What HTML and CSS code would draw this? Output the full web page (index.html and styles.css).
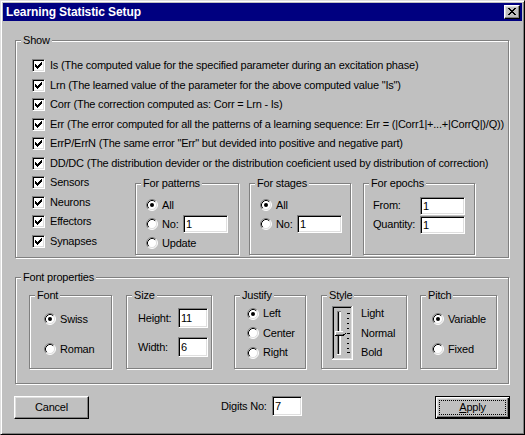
FILE: index.html
```html
<!DOCTYPE html>
<html>
<head>
<meta charset="utf-8">
<title>Learning Statistic Setup</title>
<link rel="stylesheet" href="styles.css">
</head>
<body>
<svg class="defs" width="0" height="0" aria-hidden="true">
  <symbol id="chk" viewBox="0 0 11 11">
    <path d="M2 4h1v3h-1zM3 5h1v3h-1zM4 6h1v3h-1zM5 5h1v3h-1zM6 4h1v3h-1zM7 3h1v3h-1zM8 2h1v3h-1z" fill="#000"/>
  </symbol>
  <symbol id="radio" viewBox="0 0 12 12">
    <circle cx="6" cy="6" r="5" fill="#fff"/>
    <path d="M2.11 9.89A5.5 5.5 0 0 1 9.89 2.11" fill="none" stroke="#808080"/>
    <path d="M9.89 2.11A5.5 5.5 0 0 1 2.11 9.89" fill="none" stroke="#fff"/>
    <path d="M2.82 9.18A4.5 4.5 0 0 1 9.18 2.82" fill="none" stroke="#000"/>
    <path d="M9.18 2.82A4.5 4.5 0 0 1 2.82 9.18" fill="none" stroke="#dfdfdf"/>
  </symbol>
  <symbol id="radio-on" viewBox="0 0 12 12">
    <use href="#radio"/>
    <circle cx="6" cy="6" r="2" fill="#000"/>
  </symbol>
</svg>
<div class="window">
  <div class="titlebar">
    <span class="title">Learning Statistic Setup</span>
    <div class="close">
      <svg width="8" height="7" viewBox="0 0 8 7" shape-rendering="crispEdges"><path d="M0 0h2v1h-2zM6 0h2v1h-2zM1 1h2v1h-2zM5 1h2v1h-2zM2 2h4v1h-4zM3 3h2v1h-2zM2 4h4v1h-4zM1 5h2v1h-2zM5 5h2v1h-2zM0 6h2v1h-2zM6 6h2v1h-2z" fill="#000"/></svg>
    </div>
  </div>
  <div class="client">
    <div class="group show">
      <span class="group-label">Show</span>
      <div class="check-row"><span class="checkbox"><svg width="11" height="11" shape-rendering="crispEdges"><use href="#chk"/></svg></span><span>Is (The computed value for the specified parameter during an excitation phase)</span></div>
      <div class="check-row"><span class="checkbox"><svg width="11" height="11" shape-rendering="crispEdges"><use href="#chk"/></svg></span><span>Lrn (The learned value of the parameter for the above computed value "Is")</span></div>
      <div class="check-row"><span class="checkbox"><svg width="11" height="11" shape-rendering="crispEdges"><use href="#chk"/></svg></span><span>Corr (The correction computed as: Corr = Lrn - Is)</span></div>
      <div class="check-row"><span class="checkbox"><svg width="11" height="11" shape-rendering="crispEdges"><use href="#chk"/></svg></span><span>Err (The error computed for all the patterns of a learning sequence: Err = (|Corr1|+...+|CorrQ|)/Q))</span></div>
      <div class="check-row"><span class="checkbox"><svg width="11" height="11" shape-rendering="crispEdges"><use href="#chk"/></svg></span><span>ErrP/ErrN (The same error "Err" but devided into positive and negative part)</span></div>
      <div class="check-row"><span class="checkbox"><svg width="11" height="11" shape-rendering="crispEdges"><use href="#chk"/></svg></span><span>DD/DC (The distribution devider or the distribution coeficient used by distribution of correction)</span></div>
      <div class="show-bottom">
        <div class="left-col">
          <div class="check-row"><span class="checkbox"><svg width="11" height="11" shape-rendering="crispEdges"><use href="#chk"/></svg></span><span>Sensors</span></div>
          <div class="check-row"><span class="checkbox"><svg width="11" height="11" shape-rendering="crispEdges"><use href="#chk"/></svg></span><span>Neurons</span></div>
          <div class="check-row"><span class="checkbox"><svg width="11" height="11" shape-rendering="crispEdges"><use href="#chk"/></svg></span><span>Effectors</span></div>
          <div class="check-row"><span class="checkbox"><svg width="11" height="11" shape-rendering="crispEdges"><use href="#chk"/></svg></span><span>Synapses</span></div>
        </div>
        <div class="group sub patterns">
          <span class="group-label">For patterns</span>
          <div class="radio-row"><svg class="radio"><use href="#radio-on"/></svg><span>All</span></div>
          <div class="radio-row"><svg class="radio"><use href="#radio"/></svg><span class="no-label">No:</span><input class="edit" type="text" value="1"></div>
          <div class="radio-row"><svg class="radio"><use href="#radio"/></svg><span>Update</span></div>
        </div>
        <div class="group sub stages">
          <span class="group-label">For stages</span>
          <div class="radio-row"><svg class="radio"><use href="#radio-on"/></svg><span>All</span></div>
          <div class="radio-row"><svg class="radio"><use href="#radio"/></svg><span class="no-label">No:</span><input class="edit" type="text" value="1"></div>
        </div>
        <div class="group sub epochs">
          <span class="group-label">For epochs</span>
          <div class="field-row"><span class="field-label">From:</span><input class="edit" type="text" value="1"></div>
          <div class="field-row"><span class="field-label">Quantity:</span><input class="edit" type="text" value="1"></div>
        </div>
      </div>
    </div>

    <div class="group font-props">
      <span class="group-label">Font properties</span>
      <div class="group fsub font-g">
        <span class="group-label">Font</span>
        <div class="radio-row"><svg class="radio"><use href="#radio-on"/></svg><span>Swiss</span></div>
        <div class="radio-row"><svg class="radio"><use href="#radio"/></svg><span>Roman</span></div>
      </div>
      <div class="group fsub size-g">
        <span class="group-label">Size</span>
        <div class="size-row"><span class="size-label">Height:</span><input class="edit small" type="text" value="11"></div>
        <div class="size-row"><span class="size-label">Width:</span><input class="edit small" type="text" value="6"></div>
      </div>
      <div class="group fsub justify-g">
        <span class="group-label">Justify</span>
        <div class="radio-row tall"><svg class="radio"><use href="#radio-on"/></svg><span>Left</span></div>
        <div class="radio-row tall"><svg class="radio"><use href="#radio"/></svg><span>Center</span></div>
        <div class="radio-row tall"><svg class="radio"><use href="#radio"/></svg><span>Right</span></div>
      </div>
      <div class="group fsub style-g">
        <span class="group-label">Style</span>
        <svg class="trackbar" width="21" height="54" viewBox="0 0 21 54" shape-rendering="crispEdges">
          <rect x="0" y="0" width="21" height="1" fill="#808080"/>
          <rect x="0" y="0" width="1" height="54" fill="#808080"/>
          <rect x="1" y="1" width="19" height="1" fill="#000"/>
          <rect x="1" y="1" width="1" height="52" fill="#000"/>
          <rect x="0" y="53" width="21" height="1" fill="#fff"/>
          <rect x="20" y="0" width="1" height="54" fill="#fff"/>
          <rect x="1" y="52" width="19" height="1" fill="#dfdfdf"/>
          <rect x="19" y="1" width="1" height="52" fill="#dfdfdf"/>
          <rect x="5" y="5" width="1" height="44" fill="#808080"/>
          <rect x="6" y="5" width="1" height="44" fill="#000"/>
          <rect x="7" y="5" width="1" height="44" fill="#dfdfdf"/>
          <rect x="8" y="5" width="1" height="44" fill="#fff"/>
          <rect x="5" y="5" width="4" height="1" fill="#808080"/>
          <rect x="5" y="48" width="4" height="1" fill="#fff"/>
          <rect x="15" y="7" width="3" height="1" fill="#000"/>
          <rect x="15" y="12" width="2" height="1" fill="#000"/>
          <rect x="15" y="17" width="2" height="1" fill="#000"/>
          <rect x="15" y="22" width="2" height="1" fill="#000"/>
          <rect x="15" y="27" width="3" height="1" fill="#000"/>
          <rect x="15" y="32" width="2" height="1" fill="#000"/>
          <rect x="15" y="37" width="2" height="1" fill="#000"/>
          <rect x="15" y="42" width="2" height="1" fill="#000"/>
          <rect x="15" y="46" width="3" height="1" fill="#000"/>
          <polygon points="3,25 11,25 13,27 11,29 3,29" fill="#c0c0c0"/>
          <rect x="3" y="25" width="8" height="1" fill="#fff"/>
          <rect x="3" y="25" width="1" height="5" fill="#fff"/>
          <rect x="3" y="29" width="9" height="1" fill="#000"/>
          <rect x="11" y="28" width="2" height="1" fill="#000"/>
          <rect x="13" y="27" width="1" height="1" fill="#000"/>
          <rect x="4" y="28" width="7" height="1" fill="#808080"/>
        </svg>
        <div class="style-labels">
          <div class="style-label">Light</div>
          <div class="style-label">Normal</div>
          <div class="style-label">Bold</div>
        </div>
      </div>
      <div class="group fsub pitch-g">
        <span class="group-label">Pitch</span>
        <div class="radio-row"><svg class="radio"><use href="#radio-on"/></svg><span>Variable</span></div>
        <div class="radio-row"><svg class="radio"><use href="#radio"/></svg><span>Fixed</span></div>
      </div>
    </div>

    <div class="bottom-row">
      <button class="btn" type="button">Cancel</button>
      <div class="digits">
        <span class="digits-label">Digits No:</span>
        <input class="edit digits-edit" type="text" value="7">
      </div>
      <button class="btn default" type="button"><span class="focus"><u>A</u>pply</span></button>
    </div>
  </div>
</div>
</body>
</html>
```

FILE: styles.css
```css
* { box-sizing: border-box; }
html, body { margin: 0; padding: 0; }
body {
  width: 525px;
  height: 435px;
  overflow: hidden;
  background: #c0c0c0;
  color: #000;
  font-family: "Liberation Sans", Arial, sans-serif;
  font-size: 11px;
  letter-spacing: -0.2px;
  line-height: 13px;
}
.defs { display: block; width: 0; height: 0; overflow: hidden; }

.window {
  width: 525px;
  height: 435px;
  border: 1px solid;
  border-color: #dfdfdf #000 #000 #dfdfdf;
  box-shadow: inset 1px 1px #fff, inset -1px -1px #808080;
  padding: 2px;
  display: flex;
  flex-direction: column;
}
.titlebar {
  height: 18px;
  flex: none;
  background: #000080;
  color: #fff;
  font-weight: bold;
  font-size: 12px;
  letter-spacing: -0.1px;
  display: flex;
  align-items: center;
  justify-content: space-between;
  padding: 0 2px 0 3px;
}
.close {
  width: 16px;
  height: 14px;
  background: #c0c0c0;
  border: 1px solid;
  border-color: #fff #000 #000 #fff;
  box-shadow: inset -1px -1px #808080, inset 1px 1px #dfdfdf;
  display: flex;
  align-items: flex-start;
  justify-content: flex-start;
  padding: 2px 0 0 3px;
}
.close svg { display: block; }

.client { flex: 1; }

.group {
  position: relative;
  border: 1px solid #808080;
  box-shadow: 1px 1px 0 #fff, inset 1px 1px 0 #fff;
}
.group-label {
  position: absolute;
  top: -7px;
  left: 5px;
  padding: 0 2px;
  background: #c0c0c0;
  line-height: 13px;
  white-space: nowrap;
}

.show {
  width: 494px;
  height: 218px;
  margin: 19px 0 0 12px;
  padding: 14.75px 0 0 16px;
}
.check-row {
  display: flex;
  align-items: center;
  height: 19.5px;
  gap: 5px;
  white-space: nowrap;
}
.checkbox {
  width: 13px;
  height: 13px;
  flex: none;
  background: #fff;
  border: 1px solid;
  border-color: #808080 #fff #fff #808080;
  box-shadow: inset 1px 1px #000, inset -1px -1px #dfdfdf;
}
.checkbox svg { display: block; }

.show-bottom { display: flex; align-items: flex-start; }
.left-col { width: 103px; flex: none; }
.sub { height: 72px; margin-top: 10.25px; flex: none; }
.patterns { width: 104px; padding: 11.5px 0 0 10px; }
.stages { width: 102px; margin-left: 10px; padding: 11.5px 0 0 10px; }
.epochs { width: 112px; margin-left: 12px; padding: 12px 0 0 9px; }

.radio-row {
  display: flex;
  align-items: center;
  height: 19px;
  white-space: nowrap;
}
.radio-row.tall { height: 19.5px; }
.radio {
  width: 12px;
  height: 12px;
  flex: none;
  display: block;
  margin-right: 4px;
}
.no-label { width: 17px; margin-right: 4px; }

.edit {
  width: 45px;
  height: 18px;
  margin: 0;
  padding: 0 0 0 2px;
  background: #fff;
  border: 1px solid;
  border-color: #808080 #fff #fff #808080;
  box-shadow: inset 1px 1px #000, inset -1px -1px #dfdfdf;
  font: inherit;
  letter-spacing: inherit;
  color: #000;
  outline: none;
}
.field-row { display: flex; align-items: center; height: 19px; white-space: nowrap; }
.field-label { width: 47px; flex: none; }

.font-props {
  width: 494px;
  height: 107px;
  margin: 19px 0 0 12px;
  padding: 17px 0 0 0;
  display: flex;
  align-items: flex-start;
}
.fsub { height: 74px; flex: none; }
.font-g {
  width: 83px;
  margin-left: 13px;
  padding: 13.5px 0 0 14px;
  display: flex;
  flex-direction: column;
  gap: 11px;
}
.size-g {
  width: 86px;
  margin-left: 14px;
  padding: 12px 0 0 11px;
  display: flex;
  flex-direction: column;
  gap: 9px;
}
.size-row { display: flex; align-items: center; height: 20px; white-space: nowrap; }
.size-label { width: 40px; flex: none; }
.edit.small { width: 30px; height: 20px; }
.justify-g {
  width: 72px;
  margin-left: 22px;
  padding: 8px 0 0 12px;
}
.style-g {
  width: 86px;
  margin-left: 15px;
  padding: 8px 0 0 10px;
  display: flex;
  align-items: flex-start;
}
.trackbar { display: block; flex: none; margin: 2px 8px 0 0; }
.style-label { height: 19.5px; display: flex; align-items: center; }
.pitch-g {
  width: 77px;
  margin-left: 13px;
  padding: 13.5px 0 0 11px;
  display: flex;
  flex-direction: column;
  gap: 11px;
}

.bottom-row {
  display: flex;
  align-items: flex-start;
  margin-top: 12px;
  padding: 0 12px 0 11px;
}
.btn {
  width: 75px;
  height: 23px;
  margin: 0;
  padding: 0;
  background: #c0c0c0;
  border: 1px solid;
  border-color: #fff #000 #000 #fff;
  box-shadow: inset -1px -1px #808080, inset 1px 1px #dfdfdf;
  font: inherit;
  letter-spacing: inherit;
  color: #000;
  display: flex;
  align-items: center;
  justify-content: center;
}
.btn.default {
  border: 1px solid #000;
  box-shadow: inset 1px 1px #fff, inset -1px -1px #000, inset -2px -2px #808080, inset 2px 2px #dfdfdf;
  margin-left: auto;
  padding: 3px;
  align-items: stretch;
}
.focus {
  flex: 1;
  border: 1px dotted #000;
  display: flex;
  align-items: center;
  justify-content: center;
}
.focus u { text-decoration-thickness: 1px; text-underline-offset: 1px; }
.digits {
  display: flex;
  align-items: center;
  height: 20px;
  margin-left: 132px;
}
.digits-label { width: 51px; white-space: nowrap; }
.edit.digits-edit { width: 30px; height: 20px; }
```
